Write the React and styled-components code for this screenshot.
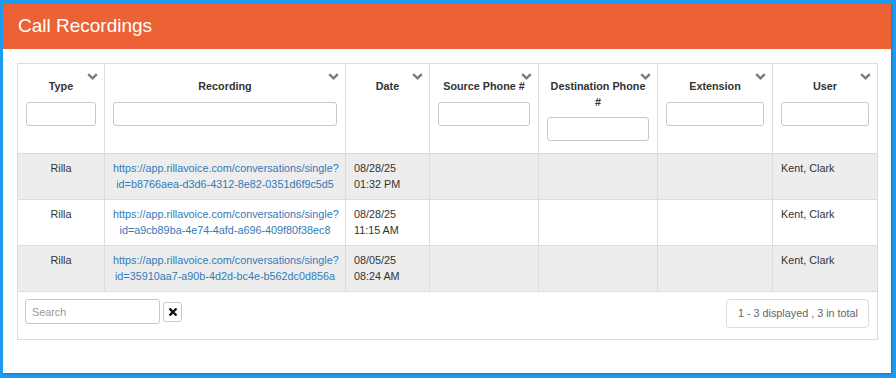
import React from "react";
import styled, { createGlobalStyle } from "styled-components";

const GlobalStyle = createGlobalStyle`
  html, body {
    margin: 0;
    padding: 0;
    width: 896px;
    height: 378px;
    overflow: hidden;
    background: #1d9bf0;
    font-family: "Liberation Sans", Arial, sans-serif;
  }
  * { box-sizing: border-box; }
`;

const Page = styled.div`
  width: 896px;
  height: 378px;
  padding: 4px 5px 4px 3px;
`;

const Panel = styled.section`
  height: 369px;
  background: #fff;
  box-shadow: 1px 1px 2px rgba(0, 0, 0, 0.22);
  display: flex;
  flex-direction: column;
`;

const Header = styled.header`
  height: 45px;
  background: #ec6234;
  color: #fff;
  font-size: 19px;
  line-height: 43px;
  padding: 0 0 2px 15px;
`;

const Body = styled.div`
  padding: 14px 13px 14px 14px;
`;

const GridBox = styled.div`
  border: 1px solid #dcdcdc;
`;

const Table = styled.table`
  width: 859px;
  table-layout: fixed;
  border-collapse: separate;
  border-spacing: 0;
  font-size: 10.8px;
  line-height: 15.5px;
  color: #333;
`;

const Th = styled.th`
  position: relative;
  width: ${(p) => p.$w}px;
  vertical-align: top;
  text-align: center;
  padding: 7px 8px;
  border-right: ${(p) => (p.$last ? "none" : "1px solid #dcdcdc")};
  border-bottom: 1px solid #dcdcdc;
  font-weight: bold;
`;

const Label = styled.div`
  margin-top: 8px;
  line-height: 15.5px;
`;

const Chevron = styled.svg`
  position: absolute;
  top: 9px;
  right: 6px;
  width: 11px;
  height: 7px;
`;

const FilterInput = styled.input`
  display: block;
  width: 100%;
  height: 24px;
  margin: 7px 0 5px;
  border: 1px solid #c8c8c8;
  border-radius: 3px;
  background: #fff;
  font: inherit;
`;

const Tr = styled.tr`
  background: ${(p) => (p.$odd ? "#ededed" : "#fff")};
`;

const Td = styled.td`
  vertical-align: top;
  text-align: ${(p) => p.$align || "left"};
  padding: 7px 8px;
  border-right: ${(p) => (p.$last ? "none" : "1px solid #dcdcdc")};
  border-bottom: 1px solid #dcdcdc;
  font-weight: normal;
`;

const Link = styled.a`
  color: #337ab7;
  text-decoration: none;
`;

const Footer = styled.div`
  display: flex;
  justify-content: space-between;
  align-items: flex-start;
  padding: 7px 8px 11px 7px;
`;

const SearchGroup = styled.div`
  display: flex;
  align-items: center;
  gap: 3px;
`;

const SearchInput = styled.input`
  width: 135px;
  height: 25px;
  border: 1px solid #c8c8c8;
  border-radius: 3px;
  padding: 0 6px;
  font-family: "Liberation Sans", Arial, sans-serif;
  font-size: 10.8px;
  color: #333;
  &::placeholder {
    color: #999;
  }
`;

const ClearButton = styled.button`
  width: 19px;
  height: 20px;
  padding: 0;
  border: 1px solid #c8c8c8;
  border-radius: 3px;
  background: #fff;
  display: flex;
  align-items: center;
  justify-content: center;
`;

const Info = styled.div`
  height: 29px;
  padding: 0 10px 0 11px;
  border: 1px solid #dcdcdc;
  border-radius: 4px;
  font-size: 10.8px;
  line-height: 27px;
  color: #666;
`;

const columns = [
  { label: ["Type"], w: 87 },
  { label: ["Recording"], w: 241 },
  { label: ["Date"], w: 84, noFilter: true },
  { label: ["Source Phone #"], w: 109 },
  { label: ["Destination Phone", "#"], w: 119 },
  { label: ["Extension"], w: 115 },
  { label: ["User"], w: 104 },
];

const rows = [
  {
    type: "Rilla",
    id: "b8766aea-d3d6-4312-8e82-0351d6f9c5d5",
    date: "08/28/25",
    time: "01:32 PM",
    user: "Kent, Clark",
  },
  {
    type: "Rilla",
    id: "a9cb89ba-4e74-4afd-a696-409f80f38ec8",
    date: "08/28/25",
    time: "11:15 AM",
    user: "Kent, Clark",
  },
  {
    type: "Rilla",
    id: "35910aa7-a90b-4d2d-bc4e-b562dc0d856a",
    date: "08/05/25",
    time: "08:24 AM",
    user: "Kent, Clark",
  },
];

const ChevronIcon = () => (
  <Chevron viewBox="0 0 11 7">
    <path d="M1.2 1.2 L5.5 5.3 L9.8 1.2" fill="none" stroke="#7a7a7a" strokeWidth="2.4" />
  </Chevron>
);

export default function App() {
  return (
    <>
      <GlobalStyle />
      <Page>
        <Panel>
          <Header>Call Recordings</Header>
          <Body>
            <GridBox>
              <Table>
                <thead>
                  <tr>
                    {columns.map((c, i) => (
                      <Th key={i} $w={c.w} $last={i === columns.length - 1}>
                        <ChevronIcon />
                        <Label>
                          {c.label.map((l, j) => (
                            <React.Fragment key={j}>
                              {j > 0 && <br />}
                              {l}
                            </React.Fragment>
                          ))}
                        </Label>
                        {!c.noFilter && <FilterInput type="text" />}
                      </Th>
                    ))}
                  </tr>
                </thead>
                <tbody>
                  {rows.map((r, i) => {
                    const url = `https://app.rillavoice.com/conversations/single?id=${r.id}`;
                    return (
                      <Tr key={i} $odd={i % 2 === 0}>
                        <Td $align="center">{r.type}</Td>
                        <Td $align="center">
                          <Link href={url}>
                            https://app.rillavoice.com/conversations/single?
                            <wbr />
                            id={r.id}
                          </Link>
                        </Td>
                        <Td>
                          {r.date}
                          <br />
                          {r.time}
                        </Td>
                        <Td />
                        <Td />
                        <Td />
                        <Td $last>{r.user}</Td>
                      </Tr>
                    );
                  })}
                </tbody>
              </Table>
              <Footer>
                <SearchGroup>
                  <SearchInput type="text" placeholder="Search" />
                  <ClearButton type="button" aria-label="Clear">
                    <svg width="8" height="8" viewBox="0 0 8 8">
                      <path d="M1.3 1.3 L6.7 6.7 M6.7 1.3 L1.3 6.7" stroke="#111" strokeWidth="2.3" strokeLinecap="square" />
                    </svg>
                  </ClearButton>
                </SearchGroup>
                <Info>1 - 3 displayed , 3 in total</Info>
              </Footer>
            </GridBox>
          </Body>
        </Panel>
      </Page>
    </>
  );
}
